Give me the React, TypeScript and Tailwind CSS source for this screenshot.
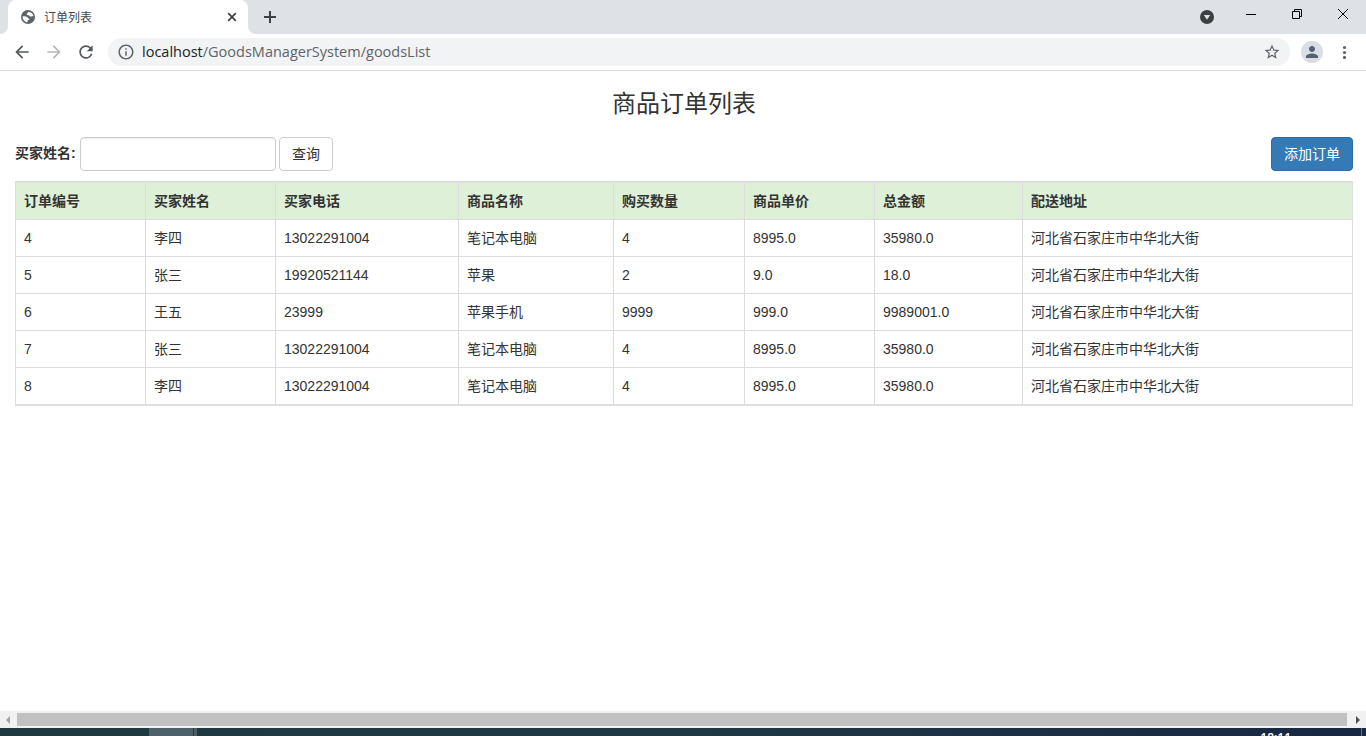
import React from 'react';
import { MdInfoOutline, MdStarBorder, MdPerson, MdRefresh, MdArrowBack, MdArrowForward } from 'react-icons/md';

const columns = [
  { title: '订单编号', width: 'w-[130px]' },
  { title: '买家姓名', width: 'w-[130px]' },
  { title: '买家电话', width: 'w-[183px]' },
  { title: '商品名称', width: 'w-[155px]' },
  { title: '购买数量', width: 'w-[131px]' },
  { title: '商品单价', width: 'w-[130px]' },
  { title: '总金额', width: 'w-[148px]' },
  { title: '配送地址', width: 'w-[331px]' },
];

const orders = [
  ['4', '李四', '13022291004', '笔记本电脑', '4', '8995.0', '35980.0', '河北省石家庄市中华北大街'],
  ['5', '张三', '19920521144', '苹果', '2', '9.0', '18.0', '河北省石家庄市中华北大街'],
  ['6', '王五', '23999', '苹果手机', '9999', '999.0', '9989001.0', '河北省石家庄市中华北大街'],
  ['7', '张三', '13022291004', '笔记本电脑', '4', '8995.0', '35980.0', '河北省石家庄市中华北大街'],
  ['8', '李四', '13022291004', '笔记本电脑', '4', '8995.0', '35980.0', '河北省石家庄市中华北大街'],
];

const GlobeIcon = () => (
  <svg width="14" height="14" viewBox="0 0 14 14" className="ml-px">
    <circle cx="7" cy="7" r="7" fill="#5f6368" />
    <path d="M7.300 1.700c-.2 1.200-.9 1.500-1.600 2 .1 1.300 1 1.600 2.300 1.500.5.900 1.200 1.500 2.400 1.300l2-.5c-.3-2.200-2.300-4.200-5.100-4.300z" fill="#fff" />
    <path d="M1.600 6.300c1.600-.2 3.600 0 4.700.6.700.5.400 1.400 1.400 1.600 1 .3.700 1.400-.2 1.600-.9.200-.8 1.300-1.100 2.200-2.800-.2-5-2.800-4.800-6z" fill="#fff" />
  </svg>
);

const TabBar = () => (
  <div className="flex h-[34px] shrink-0 bg-[#dee1e6]">
    <div className="flex w-2 items-end bg-white">
      <div className="h-full w-full rounded-br-lg bg-[#dee1e6]" />
    </div>
    <div className="flex w-[240px] items-center rounded-t-lg bg-white pl-3 pr-[10px]">
      <GlobeIcon />
      <span className="ml-[9px] mt-px flex-1 text-[12px] leading-4 text-[#45494d]">订单列表</span>
      <svg width="12" height="12" viewBox="0 0 12 12" className="text-[#3c4043]">
        <path d="M2.200 2.200l7.600 7.600M9.800 2.200l-7.600 7.600" stroke="currentColor" strokeWidth="1.700" />
      </svg>
    </div>
    <div className="w-2 bg-white">
      <div className="h-full w-full rounded-bl-lg bg-[#dee1e6]" />
    </div>
    <div className="flex flex-1 items-center pl-2">
      <svg width="12" height="12" viewBox="0 0 12 12">
        <path d="M6 0v12M0 6h12" stroke="#3c4043" strokeWidth="2" />
      </svg>
    </div>
    <svg width="14" height="14" viewBox="0 0 14 14" className="mr-[32px] mt-[10px]">
      <circle cx="7" cy="7" r="7" fill="#3c4043" />
      <path d="M3.800 5h6.400L7 9.800z" fill="#dee1e6" />
    </svg>
    <svg width="10" height="10" viewBox="0 0 10 10" className="mr-[36px] mt-[9px]">
      <path d="M0 5.500h10" stroke="#000" />
    </svg>
    <svg width="10" height="10" viewBox="0 0 10 10" className="mr-[36px] mt-[9px]">
      <path d="M.5 2.500h7v7h-7zM2.500 2.500v-2h7v7h-2" fill="none" stroke="#000" />
    </svg>
    <svg width="10" height="10" viewBox="0 0 10 10" className="mr-[18px] mt-[9px]">
      <path d="M0 0l10 10M10 0L0 10" stroke="#000" />
    </svg>
  </div>
);

const AddressBar = () => (
  <div className="flex h-[37px] shrink-0 items-center border-b border-[#dadce0] bg-white pl-3 text-[#5f6368]">
    <MdArrowBack className="size-5 text-[#54585d]" />
    <MdArrowForward className="ml-3 size-5 text-[#b6b8bb]" />
    <MdRefresh className="ml-3 size-5 text-[#54585d]" />
    <div className="ml-3 flex h-7 w-[1182px] items-center rounded-full bg-[#f1f3f4] pl-[9px] pr-[9px]">
      <MdInfoOutline className="size-[18px]" />
      <span className="ml-[7px] flex-1 font-['Open_Sans',sans-serif] text-[14.5px] leading-5">
        <span className="text-[#202124]">localhost</span>/GoodsManagerSystem/goodsList
      </span>
      <MdStarBorder className="size-[18px]" />
    </div>
    <div className="ml-[11px] flex size-[22px] items-center justify-center rounded-full bg-[#dadde3]">
      <MdPerson className="size-[18px] text-[#535f75]" />
    </div>
    <svg width="5" height="14" viewBox="0 0 5 14" className="ml-[19px]" fill="currentColor">
      <circle cx="2.500" cy="2.500" r="1.600" />
      <circle cx="2.500" cy="7.500" r="1.600" />
      <circle cx="2.500" cy="12.400" r="1.600" />
    </svg>
  </div>
);

const OrderTable = () => (
  <table className="w-[1338px] table-fixed border-separate border-spacing-0 border-b border-t-2 border-[#ddd]">
    <thead>
      <tr className="bg-[#dff0d8]">
        {columns.map((col) => (
          <th
            key={col.title}
            className={`${col.width} h-[37px] border-b border-l border-[#ddd] px-2 py-0 text-left font-bold last:border-r`}
          >
            {col.title}
          </th>
        ))}
      </tr>
    </thead>
    <tbody>
      {orders.map((order) => (
        <tr key={order[0]}>
          {order.map((value, i) => (
            <td key={i} className="h-[37px] border-b border-l border-[#ddd] px-2 py-0 last:border-r">
              {value}
            </td>
          ))}
        </tr>
      ))}
    </tbody>
  </table>
);

const ScrollBar = () => (
  <div className="flex h-[17px] shrink-0 items-center bg-[#f1f1f1]">
    <div className="w-[17px] pl-[6px]">
      <svg width="4" height="8" viewBox="0 0 4 8">
        <path d="M4 0v8L0 4z" fill="#a3a3a3" />
      </svg>
    </div>
    <div className="h-[13px] flex-1 bg-[#c1c1c1]" />
    <div className="w-[19px] pl-[9px]">
      <svg width="4" height="8" viewBox="0 0 4 8">
        <path d="M0 0v8l4-4z" fill="#505050" />
      </svg>
    </div>
  </div>
);

const TaskBar = () => (
  <div className="flex h-2 shrink-0 overflow-hidden bg-linear-to-r from-[#203940] via-[#203844] to-[#182742]">
    <div className="ml-[149px] h-full w-11 bg-[#4d6169]" />
    <div className="ml-px h-full w-[3px] bg-[#4d5c65]" />
    <span className="ml-auto mr-[70px] mt-[2px] font-['Open_Sans',sans-serif] text-[12px] font-semibold leading-4 text-white">18:11</span>
    <div className="mr-1 h-full w-px bg-[#687386]" />
  </div>
);

const App = () => {
  return (
    <div className="flex h-[736px] w-[1366px] flex-col overflow-hidden bg-white font-['Liberation_Sans','Noto_Sans_CJK_SC',sans-serif] text-[14px] leading-5 text-[#333]">
      <TabBar />
      <AddressBar />
      <main className="flex-1 overflow-hidden pl-[15px] pr-[13px]">
        <h3 className="mt-5 text-center text-[24px] leading-[26px]">商品订单列表</h3>
        <div className="mb-[10px] mt-5 flex h-[34px] items-center">
          <label htmlFor="buyer" className="mb-[2px] mr-1 w-[61px] whitespace-nowrap font-bold">买家姓名:</label>
          <input
            id="buyer"
            className="h-[34px] w-[196px] rounded border border-[#ccc] px-3 shadow-[inset_0_1px_1px_rgba(0,0,0,0.075)]"
          />
          <button className="ml-[3px] h-[34px] w-[54px] rounded border border-[#ccc] bg-white">查询</button>
          <button className="ml-auto h-[34px] w-[82px] rounded border border-[#2e6da4] bg-[#337ab7] text-white">添加订单</button>
        </div>
        <OrderTable />
      </main>
      <ScrollBar />
      <TaskBar />
    </div>
  );
};

export default App;
